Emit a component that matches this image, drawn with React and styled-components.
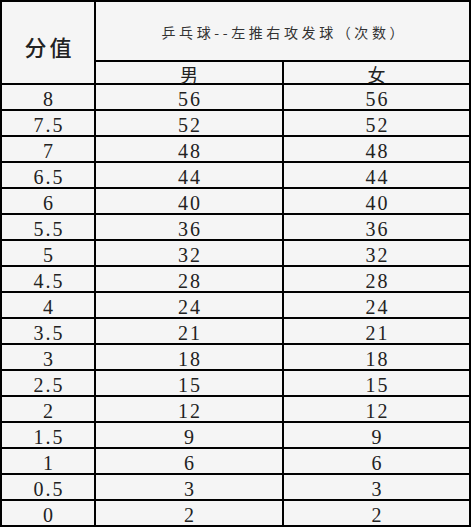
import React from "react";
import styled, { createGlobalStyle } from "styled-components";

const Global = createGlobalStyle`
  html, body {
    margin: 0;
    padding: 0;
    background: #ffffff;
  }
`;

const Sheet = styled.div`
  display: grid;
  grid-template-columns: 92px 186px 185px;
  grid-template-rows: 58px 21px repeat(17, 24px);
  gap: 2px;
  padding: 2px;
  width: 471px;
  box-sizing: border-box;
  background: #000;
`;

const Cell = styled.div`
  display: flex;
  align-items: center;
  justify-content: center;
  background: #f5f5f5;
  color: #222;
  font-family: "Liberation Serif", "Noto Sans CJK SC", serif;
  font-size: 20px;
  letter-spacing: 2px;
  text-indent: 2px;
  line-height: 1;
  padding-top: 3px;
  box-sizing: border-box;
`;

const ScoreHead = styled(Cell)`
  grid-row: span 2;
  font-family: "Noto Sans CJK SC", sans-serif;
  font-size: 22px;
  font-weight: 500;
  letter-spacing: 3px;
  text-indent: 3px;
  color: #222;
  padding-top: 6px;
`;

const TitleHead = styled(Cell)`
  grid-column: span 2;
  font-family: "Noto Sans CJK SC", sans-serif;
  font-size: 14px;
  letter-spacing: 3.6px;
  text-indent: 3.6px;
  color: #333;
  padding-top: 2px;
`;

const SexHead = styled(Cell)`
  font-family: "Noto Sans CJK SC", sans-serif;
  font-size: 18px;
  letter-spacing: 0;
  text-indent: 0;
  padding-top: 2px;
`;

const rows = [
  ["8", "56", "56"],
  ["7.5", "52", "52"],
  ["7", "48", "48"],
  ["6.5", "44", "44"],
  ["6", "40", "40"],
  ["5.5", "36", "36"],
  ["5", "32", "32"],
  ["4.5", "28", "28"],
  ["4", "24", "24"],
  ["3.5", "21", "21"],
  ["3", "18", "18"],
  ["2.5", "15", "15"],
  ["2", "12", "12"],
  ["1.5", "9", "9"],
  ["1", "6", "6"],
  ["0.5", "3", "3"],
  ["0", "2", "2"],
];

export default function App() {
  return (
    <>
      <Global />
      <Sheet>
        <ScoreHead>分值</ScoreHead>
        <TitleHead>乒乓球--左推右攻发球（次数）</TitleHead>
        <SexHead>男</SexHead>
        <SexHead>女</SexHead>
        {rows.map(([score, male, female]) => (
          <React.Fragment key={score}>
            <Cell>{score}</Cell>
            <Cell>{male}</Cell>
            <Cell>{female}</Cell>
          </React.Fragment>
        ))}
      </Sheet>
    </>
  );
}
